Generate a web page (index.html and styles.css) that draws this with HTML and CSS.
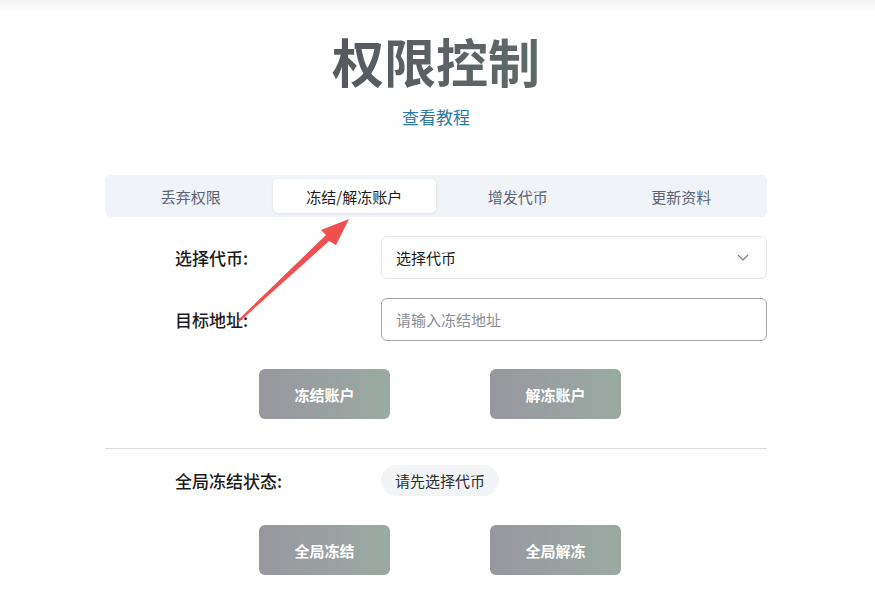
FILE: index.html
```html
<!DOCTYPE html>
<html lang="zh-CN">
<head>
<meta charset="utf-8">
<title>权限控制</title>
<link rel="stylesheet" href="styles.css">
</head>
<body>
<div class="topshade"></div>
<main class="page">
  <header class="head">
    <h1 class="title">权限控制</h1>
    <a class="tutorial" href="#">查看教程</a>
  </header>

  <nav class="tabs">
    <div class="tab">丢弃权限</div>
    <div class="tab active">冻结/解冻账户</div>
    <div class="tab">增发代币</div>
    <div class="tab">更新资料</div>
  </nav>

  <section class="form">
    <div class="row">
      <label class="label">选择代币:</label>
      <div class="select">
        <span>选择代币</span>
        <svg class="chev" width="12" height="7" viewBox="0 0 12 7"><path d="M1 1l5 5 5-5" fill="none" stroke="#7a7a7a" stroke-width="1.2"/></svg>
      </div>
    </div>
    <div class="row">
      <label class="label">目标地址:</label>
      <div class="input"><span class="ph">请输入冻结地址</span></div>
    </div>
    <div class="actions">
      <button class="btn">冻结账户</button>
      <button class="btn">解冻账户</button>
    </div>
  </section>

  <hr class="divider">

  <section class="form">
    <div class="row status-row">
      <label class="label">全局冻结状态:</label>
      <span class="pill">请先选择代币</span>
    </div>
    <div class="actions actions-global">
      <button class="btn">全局冻结</button>
      <button class="btn">全局解冻</button>
    </div>
  </section>
</main>

<svg class="arrow" width="875" height="613" viewBox="0 0 875 613">
  <polygon points="237,321 239,322 329,241 336,245 349,219 321,230 326,235" fill="#ef4f4f"/>
</svg>
</body>
</html>
```

FILE: styles.css
```css
* { box-sizing: border-box; }
html, body { margin: 0; padding: 0; background: #fff; }
body {
  font-family: "Noto Sans CJK SC", "Noto Sans", sans-serif;
  color: #1f2328;
  width: 875px;
  height: 613px;
  overflow: hidden;
  position: relative;
}
.topshade {
  position: absolute;
  left: 0; top: 0; right: 0;
  height: 12px;
  background: linear-gradient(#f2f2f2, rgba(255,255,255,0));
}
.page {
  width: 662px;
  margin: 0 0 0 105px;
  padding-top: 29px;
}
.head {
  display: flex;
  flex-direction: column;
  align-items: center;
}
.title {
  margin: 0;
  font-size: 52px;
  line-height: 64px;
  font-weight: 700;
  background: linear-gradient(90deg, #56595f, #5f6a68);
  -webkit-background-clip: text;
  background-clip: text;
  color: transparent;
}
.tutorial {
  margin-top: 12px;
  font-size: 17px;
  line-height: 24px;
  color: #2b7aa6;
  text-decoration: none;
}
.tabs {
  margin-top: 46px;
  height: 42px;
  padding: 4px;
  background: #f0f3f8;
  border-radius: 6px;
  display: grid;
  grid-template-columns: repeat(4, 1fr);
}
.tab {
  display: flex;
  align-items: center;
  justify-content: center;
  font-size: 15px;
  color: #5b6472;
  border-radius: 5px;
}
.tab.active {
  background: #fff;
  color: #1a1a1a;
  box-shadow: 0 1px 3px rgba(0,0,0,0.08);
}
.form { display: flex; flex-direction: column; }
.row {
  display: flex;
  align-items: center;
  padding-left: 70px;
  height: 43px;
  margin-top: 19px;
}
.label {
  width: 206px;
  font-size: 17px;
  font-weight: 500;
  color: #1a1a1a;
}
.select, .input {
  flex: 1;
  height: 43px;
  border-radius: 6px;
  display: flex;
  align-items: center;
  padding: 0 14px;
  font-size: 15px;
}
.select {
  border: 1px solid #e6e8eb;
  justify-content: space-between;
  color: #1a1a1a;
  padding-right: 17px;
}
.input {
  border: 1px solid #a3a6ab;
}
.ph { color: #8a8d92; }
.actions {
  display: flex;
  justify-content: center;
  gap: 100px;
  margin-top: 28px;
  padding-left: 8px;
}
.actions-global { margin-top: 29px; }
.btn {
  width: 131px;
  height: 50px;
  border: none;
  border-radius: 6px;
  background: linear-gradient(90deg, #98979f, #9aaaa2);
  color: #fff;
  font-family: inherit;
  font-size: 15px;
  font-weight: 700;
  padding: 0;
}
.divider {
  margin: 29px 0 0;
  border: none;
  border-top: 1px solid #dcdcdc;
  height: 0;
}
.status-row { margin-top: 16px; height: 31px; }
.pill {
  height: 31px;
  padding: 0 14px;
  border-radius: 16px;
  background: #f3f4f6;
  font-size: 15px;
  color: #2a2d31;
  display: flex;
  align-items: center;
}
.arrow {
  position: absolute;
  left: 0; top: 0;
  pointer-events: none;
}
```
